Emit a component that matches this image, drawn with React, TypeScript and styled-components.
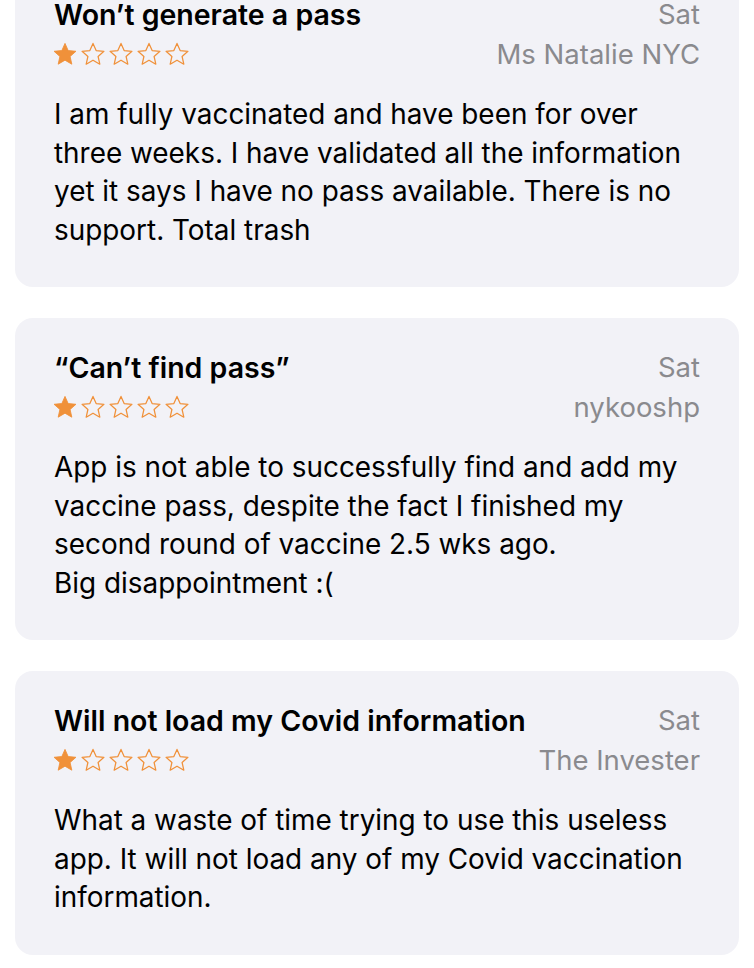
import React from "react"
import styled, { createGlobalStyle } from "styled-components"

type Review = {
   title: string
   date: string
   author: string
   rating: number
   body: string[]
}

const reviews: Review[] = [
   {
      title: "Won’t generate a pass",
      date: "Sat",
      author: "Ms Natalie NYC",
      rating: 1,
      body: [
         "I am fully vaccinated and have been for over three weeks. I have validated all the information yet it says I have no pass available. There is no support. Total trash",
      ],
   },
   {
      title: "“Can’t find pass”",
      date: "Sat",
      author: "nykooshp",
      rating: 1,
      body: [
         "App is not able to successfully find and add my vaccine pass, despite the fact I finished my second round of vaccine 2.5 wks ago.",
         "Big disappointment :(",
      ],
   },
   {
      title: "Will not load my Covid information",
      date: "Sat",
      author: "The Invester",
      rating: 1,
      body: [
         "What a waste of time trying to use this useless app. It will not load any of my Covid vaccination information.",
      ],
   },
]

const STAR_PATH =
   "M12 2.2l2.9 6.6 7.2.7-5.4 4.8 1.6 7.1L12 17.7l-6.3 3.7 1.6-7.1L1.9 9.5l7.2-.7z"

function Star({ filled }: { filled: boolean }) {
   return (
      <StarIcon viewBox="0 0 24 24">
         <path
            d={STAR_PATH}
            fill={filled ? "#f0913a" : "none"}
            stroke="#f0913a"
            strokeWidth={filled ? 0.8 : 1.15}
            strokeLinejoin="round"
         />
      </StarIcon>
   )
}

function ReviewCard({ review }: { review: Review }) {
   return (
      <Card>
         <HeaderRow>
            <Title>{review.title}</Title>
            <Meta>{review.date}</Meta>
         </HeaderRow>
         <SubRow>
            <Stars>
               {[0, 1, 2, 3, 4].map(i => (
                  <Star key={i} filled={i < review.rating} />
               ))}
            </Stars>
            <Meta>{review.author}</Meta>
         </SubRow>
         <Body>
            {review.body.map((para, i) => (
               <p key={i}>{para}</p>
            ))}
         </Body>
      </Card>
   )
}

export default function App() {
   return (
      <>
         <GlobalStyle />
         <Page>
            {reviews.map((r, i) => (
               <ReviewCard key={i} review={r} />
            ))}
         </Page>
      </>
   )
}

const GlobalStyle = createGlobalStyle`
   html, body {
      margin: 0;
      background: #ffffff;
      overflow: hidden;
   }
   body {
      font-family: Inter, "Liberation Sans", sans-serif;
      -webkit-font-smoothing: antialiased;
   }
`

const Page = styled.div`
   display: flex;
   flex-direction: column;
   gap: 31px;
   padding: 0 15px;
   margin-top: -35px;
`

const Card = styled.div`
   background: #f2f2f7;
   border-radius: 18px;
   padding: 33px 39px 38px;
`

const HeaderRow = styled.div`
   display: flex;
   justify-content: space-between;
   align-items: center;
   height: 32px;
`

const Title = styled.div`
   font-size: 28.5px;
   font-weight: 600;
   color: #000;
`

const Meta = styled.div`
   font-size: 27.5px;
   color: #8a8a8e;
`

const SubRow = styled.div`
   display: flex;
   justify-content: space-between;
   align-items: center;
   height: 32px;
   margin-top: 8px;
`

const Stars = styled.div`
   display: flex;
   gap: 2px;
   margin-left: -2px;
`

const StarIcon = styled.svg`
   width: 26px;
   height: 26px;
   display: block;
`

const Body = styled.div`
   margin-top: 25px;
   font-size: 27.9px;
   line-height: 38.5px;
   color: #000;

   p {
      margin: 0;
   }
`
